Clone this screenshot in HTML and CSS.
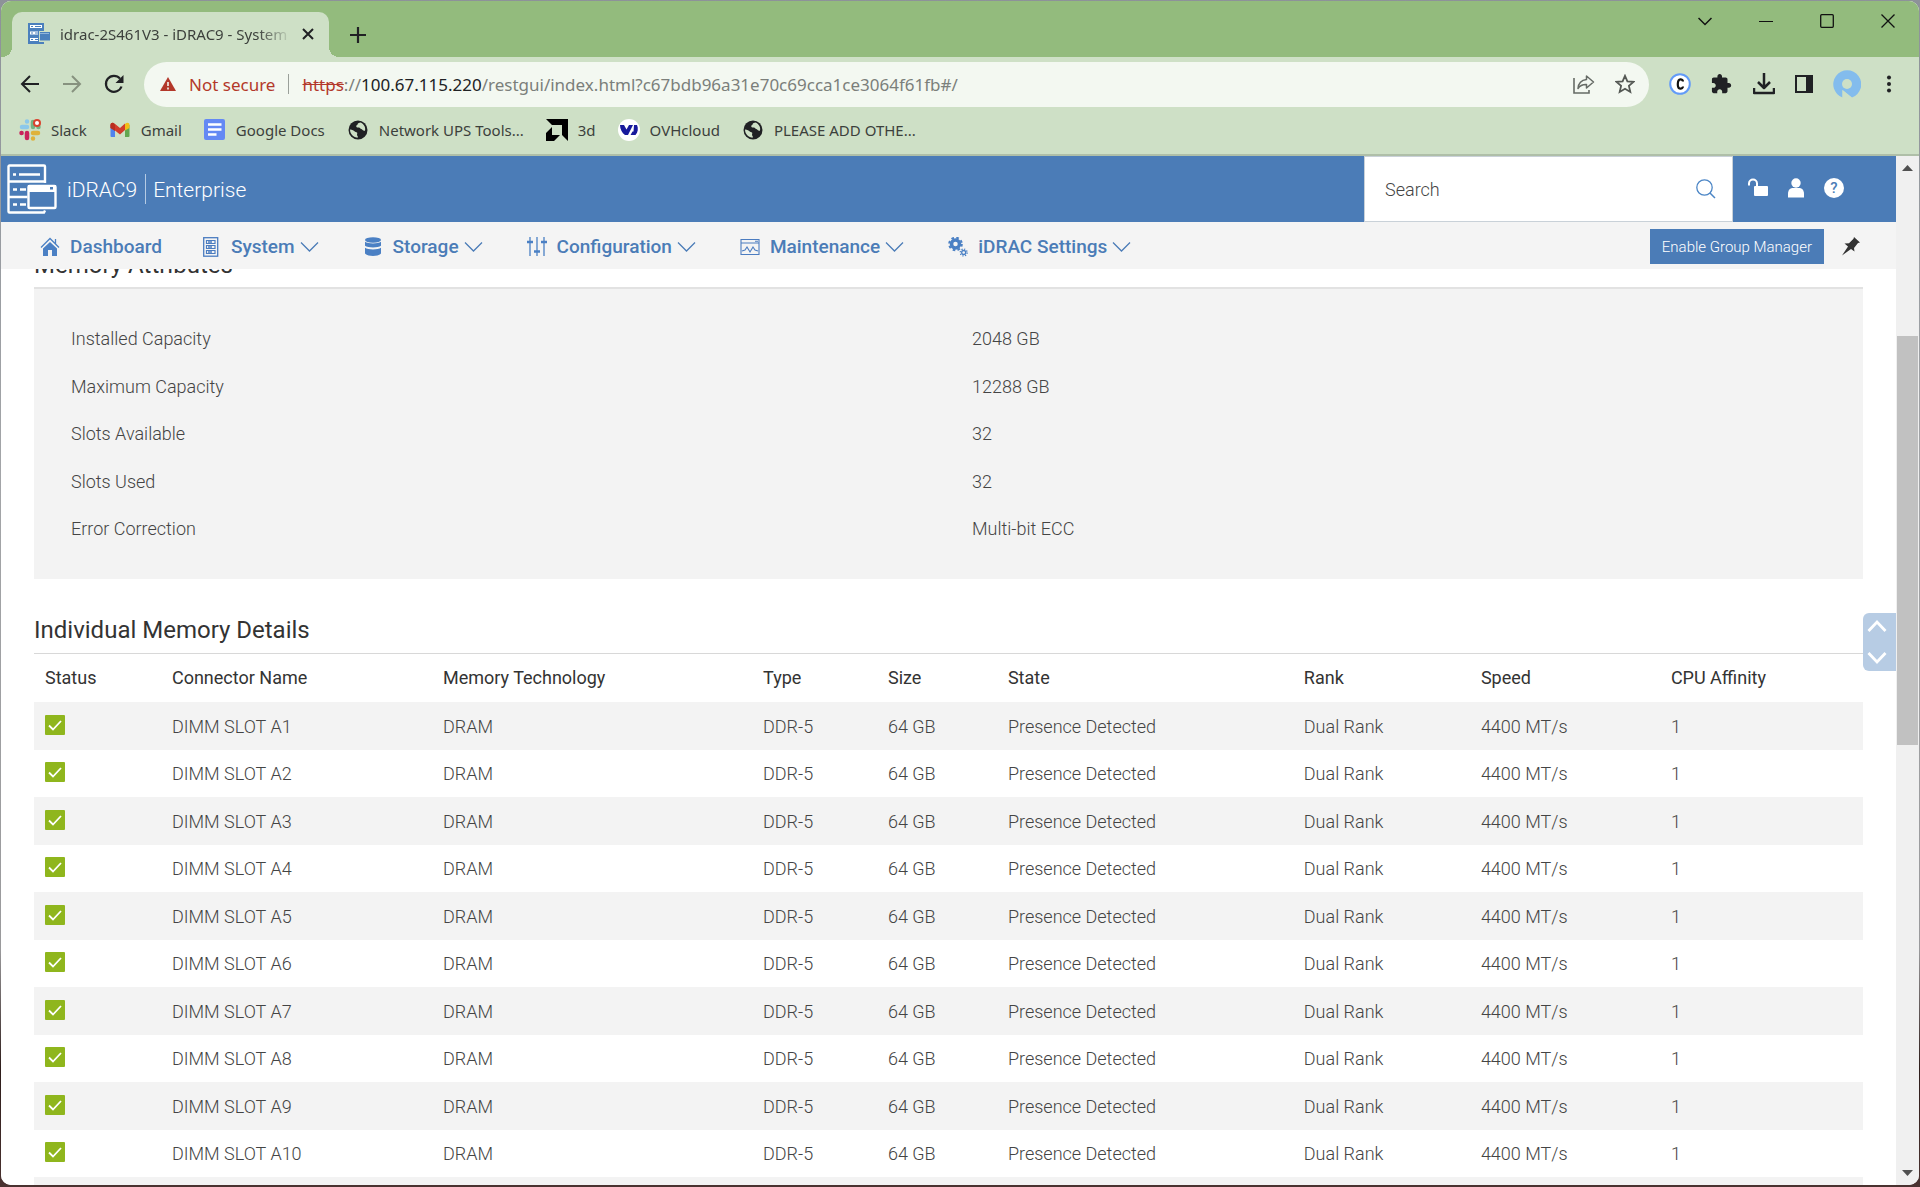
FILE: index.html
```html
<!DOCTYPE html>
<html lang="en">
<head>
<meta charset="utf-8">
<title>idrac-2S461V3 - iDRAC9 - System</title>
<link rel="stylesheet" href="styles.css">
</head>
<body>
<svg class="defs" aria-hidden="true">
  <symbol id="globe" viewBox="0 0 20 20"><circle cx="10" cy="10" r="9.5" fill="#202124"/><path d="M2 9.5c2.500.3 3.800.8 4.500 1.800.6.900 1.800.6 2.500 1.200.7.700-.2 1.600.1 2.800.2.900 1 1.300.9 2.300C5.500 17.600 2 14 2 9.500zM12.500 2.400c-1 .3-2.800.5-2.800 1.600s-1.500 1-1.500 2.200 1.500 1.400 2.600 1.200c1.100-.2 1.400 1.400 2.600 1.700 1.200.3 1.500 2.200 3.600 1.600C18 7 15.500 3.500 12.500 2.400z" fill="#cee0c6"/></symbol>
  <symbol id="chev" viewBox="0 0 19 12"><path d="M1 1.500l8.500 8.500L18 1.500" fill="none" stroke="currentColor" stroke-width="1.300"/></symbol>
  <symbol id="ok" viewBox="0 0 20 20"><rect width="20" height="20" rx="1" fill="#8fb61d"/><path d="M4 10.500l4 4 8-8.500" fill="none" stroke="#fff" stroke-width="1.800"/></symbol>
</svg>
<div class="window">
  <header class="chrome">
    <div class="tabbar">
      <div class="tab">
        <svg width="22" height="22" viewBox="0 0 22 22"><path d="M0 0h16v8h-5v11h5v2H0z" fill="#4b80bd"/><path d="M2 3.500h12M2 10h8M2 16.500h8" stroke="#fff" stroke-width="3"/><path d="M3 3.500h2M3 10h2M3 16.500h2M7 3.500h6M7 10h3M7 16.500h3" stroke="#4b80bd" stroke-width="1.200"/><rect x="12" y="9" width="10" height="8.500" fill="#4b80bd"/><path d="M12 10.500h9" stroke="#8fb3da"/></svg>
        <span class="tab-title">idrac-2S461V3 - iDRAC9 - System</span>
        <button class="plain" aria-label="Close tab"><svg width="12" height="12" viewBox="0 0 12 12"><path d="M1 1l10 10M11 1L1 11" stroke="#202124" stroke-width="2"/></svg></button>
      </div>
      <button class="plain newtab" aria-label="New tab"><svg width="16" height="16" viewBox="0 0 16 16"><path d="M8 0v16M0 8h16" stroke="#202124" stroke-width="2.200"/></svg></button>
      <div class="wincontrols">
        <button class="plain" aria-label="Search tabs"><svg width="14" height="14" viewBox="0 0 14 14"><path d="M.5 4L7 10.500 13.500 4" fill="none" stroke="#111" stroke-width="1.500"/></svg></button>
        <button class="plain" aria-label="Minimize"><svg width="14" height="14" viewBox="0 0 14 14"><path d="M0 7.500h14" stroke="#111" stroke-width="1.200"/></svg></button>
        <button class="plain" aria-label="Maximize"><svg width="14" height="14" viewBox="0 0 14 14"><rect x=".7" y=".7" width="12.600" height="12.600" rx="1" fill="none" stroke="#111" stroke-width="1.300"/></svg></button>
        <button class="plain" aria-label="Close"><svg width="14" height="14" viewBox="0 0 14 14"><path d="M.5.5l13 13M13.500.5l-13 13" stroke="#111" stroke-width="1.300"/></svg></button>
      </div>
    </div>
    <div class="toolbar">
      <div class="history">
        <button class="plain" aria-label="Back"><svg width="20" height="20" viewBox="0 0 20 20"><path d="M19 10H2.500M10 2l-8 8 8 8" fill="none" stroke="#202124" stroke-width="2"/></svg></button>
        <button class="plain" aria-label="Forward"><svg width="20" height="20" viewBox="0 0 20 20"><path d="M1 10h16.500M10 2l8 8-8 8" fill="none" stroke="#87927f" stroke-width="2"/></svg></button>
        <button class="plain" aria-label="Reload"><svg width="20" height="20" viewBox="0 0 20 20"><path d="M17.500 12.500A8 8 0 1 1 16 4.600" fill="none" stroke="#202124" stroke-width="2.200"/><path d="M19.500 1v8h-8z" fill="#202124"/></svg></button>
      </div>
      <div class="omnibox">
        <svg width="16" height="14" viewBox="0 0 16 14"><path d="M8 0l8 14H0z" fill="#b3382a"/><path d="M8 5v4M8 10.500v2" stroke="#f3f8f1" stroke-width="1.600"/></svg>
        <span class="insecure">Not secure</span>
        <span class="bar"></span>
        <div class="url" role="textbox" contenteditable="true" spellcheck="false" aria-label="Address"><s>https</s>://<b>100.67.115.220</b>/restgui/index.html?c67bdb96a31e70c69cca1ce3064f61fb#/</div>
        <button class="plain" aria-label="Share"><svg width="22" height="20" viewBox="0 0 22 20"><path d="M1 4v15h15v-3" fill="none" stroke="#666b66" stroke-width="1.600"/><path d="M5 14.500C5.500 8.500 9 6 13.500 5.500V2l7 6-7 6v-3.500C9.500 10.300 7 11.500 5 14.500z" fill="none" stroke="#666b66" stroke-width="1.500" stroke-linejoin="round"/></svg></button>
        <button class="plain" aria-label="Bookmark"><svg width="20" height="20" viewBox="0 0 20 20"><path d="M10 1.800l2.400 5.600 6.100.5-4.600 4 1.400 6L10 14.700l-5.300 3.200 1.400-6-4.600-4 6.100-.5z" fill="none" stroke="#555955" stroke-width="1.800"/></svg></button>
      </div>
      <button class="plain" aria-label="Extension C"><svg width="22" height="22" viewBox="0 0 22 22"><circle cx="11" cy="11" r="9.800" fill="#fff" stroke="#629bf8" stroke-width="2"/><path d="M14 8.500C13.800 6 9 4.500 8.800 11s5 5.200 5.200 2.500" fill="none" stroke="#111" stroke-width="2.200"/></svg></button>
      <button class="plain" aria-label="Extensions"><svg width="22" height="22" viewBox="1 0 24 24"><path fill="#202124" d="M20.500 11H19V7c0-1.100-.9-2-2-2h-4V3.500C13 2.120 11.880 1 10.500 1S8 2.120 8 3.500V5H4c-1.100 0-1.990.9-1.990 2v3.800H3.500c1.490 0 2.700 1.210 2.700 2.700s-1.210 2.700-2.700 2.700H2V20c0 1.100.9 2 2 2h3.800v-1.500c0-1.490 1.210-2.700 2.700-2.700 1.490 0 2.700 1.210 2.700 2.700V22H17c1.100 0 2-.9 2-2v-4h1.500c1.380 0 2.500-1.120 2.500-2.500S21.880 11 20.500 11z"/></svg></button>
      <button class="plain" aria-label="Downloads"><svg width="22" height="22" viewBox="0 0 22 22"><path d="M11 0v14M5 9l6 6 6-6M1 15v5h20v-5" fill="none" stroke="#202124" stroke-width="2.500" stroke-linejoin="round"/></svg></button>
      <button class="plain" aria-label="Side panel"><svg width="18" height="18" viewBox="1 1 18 18"><rect x="2" y="2" width="16" height="16" fill="none" stroke="#202124" stroke-width="2"/><path d="M12 1h7v18h-7z" fill="#202124"/></svg></button>
      <button class="plain" aria-label="Profile"><svg width="28" height="28" viewBox="0 0 28 28"><path d="M9.500 28V20L19 27.500A14 14 0 1 0 9.500 27.500z" fill="#83bced"/><path d="M9.500 20l9.500 8h-9.500z" fill="#cee0c6"/><circle cx="14" cy="14" r="5" fill="#cee0c6"/></svg></button>
      <button class="plain" aria-label="Menu"><svg width="16" height="18" viewBox="0 0 16 18"><g fill="#202124"><circle cx="8" cy="2.500" r="2"/><circle cx="8" cy="9" r="2"/><circle cx="8" cy="15.500" r="2"/></g></svg></button>
    </div>
    <nav class="bookmarks">
      <a href="#"><svg width="22" height="22" viewBox="0 0 22 22"><g fill="none" stroke-width="4.500" stroke-linecap="round"><path d="M3 8h5M8 2.500v.1" stroke="#8cc8ea"/><path d="M14 3v5M19.500 8h-.1" stroke="#74b586"/><path d="M14 14h5M14 19.500v-.1" stroke="#dfb23a"/><path d="M8 14v5M2.500 14h.1" stroke="#c9235c"/></g><circle cx="18" cy="4" r="4" fill="#d9442f"/><circle cx="18" cy="4" r="2" fill="#fff"/></svg>Slack</a>
      <a href="#"><svg width="22" height="22" viewBox="0 0 22 22"><path d="M1.500 6H6v12H2.500a1 1 0 0 1-1-1z" fill="#4f83ee"/><path d="M16 6h4.500v11a1 1 0 0 1-1 1H16z" fill="#62a650"/><path d="M1.500 9V6c0-2 2-3 4-1.500L11 9l5-4.500V11l-5 4.500-5-4z" fill="#d23c2c"/><path d="M1.500 9V6c0-1.500 1.500-2.500 3-2L6 6v6z" fill="#b92e20"/><path d="M16 11.500V5c2-2 4.500-1.500 4.500 1v3z" fill="#f2bd18"/></svg>Gmail</a>
      <a href="#"><svg width="22" height="22" viewBox="0 0 22 22"><rect width="21" height="21" rx="2" fill="#6489f4"/><path d="M4 5.500h13.500M4 10.500h13.500M4 15.500h8.500" stroke="#fff" stroke-width="2.500"/></svg>Google Docs</a>
      <a href="#"><svg width="22" height="20"><use href="#globe"/></svg>Network UPS Tools...</a>
      <a href="#"><svg width="22" height="22" viewBox="0 0 22 22"><path d="M0 0h22v22l-6-6V6H6z"/><path d="M6 8v8h8l-6 6H0v-8z"/></svg>3d</a>
      <a href="#"><svg width="22" height="22" viewBox="0 0 22 22"><circle cx="11" cy="11" r="11" fill="#fff"/><path d="M2 6h4l2.500 4.500L11 6h4l-5 10H7C4 14 2 10 2 6zM16 6h3c1.500 3.500 1 7-1.500 10h-5l2-3.500h1z" fill="#171a9c"/></svg>OVHcloud</a>
      <a href="#"><svg width="22" height="20"><use href="#globe"/></svg>PLEASE ADD OTHE...</a>
    </nav>
  </header>
  <div class="viewport">
    <div class="page">
      <header class="brandbar">
        <svg class="logo" width="50" height="50" viewBox="0 0 50 50"><g fill="none" stroke="#fff" stroke-width="2.400"><path d="M38 19V2.500a1 1 0 0 0-1-1H2.500a1 1 0 0 0-1 1v45a1 1 0 0 0 1 1H37l1-2M1.500 17.500h36.500M1.500 33h19"/><path d="M6 10.500h3M12 10.500h21M6 25.500h4M13 25.500h6M6 40.500h4M13 40.500h6"/><rect x="21.500" y="22" width="27" height="22" rx="1"/></g><path d="M21 21h28v7H21z" fill="#fff"/><path d="M43 23h3v2.500h-3z" fill="#4b7cb7"/></svg>
        <span class="brand">iDRAC9</span><span class="brand edition">Enterprise</span>
        <label class="search"><input type="text" placeholder="Search" aria-label="Search"><svg width="20" height="20" viewBox="0 0 20 20"><circle cx="8.500" cy="8.500" r="7.700" fill="none" stroke="#4c86c6" stroke-width="1.300"/><path d="M14 14l5 5" stroke="#4c86c6" stroke-width="1.500"/></svg></label>
        <div class="account">
          <button class="plain" aria-label="Lock"><svg width="20" height="20" viewBox="0 0 20 20"><path d="M1 7.500V5.500a4 4 0 0 1 8 0V9" fill="none" stroke="#fff" stroke-width="2"/><rect x="6" y="8" width="14" height="10" rx="1" fill="#fff"/></svg></button>
          <button class="plain" aria-label="User"><svg width="20" height="20" viewBox="0 0 20 20"><circle cx="10" cy="5" r="4.700" fill="#fff"/><path d="M2 19.500V16c0-4 2-6 5-6h6c3 0 5 2 5 6v3.500z" fill="#fff"/></svg></button>
          <button class="plain help" aria-label="Help">?</button>
        </div>
      </header>
      <nav class="menubar">
        <a class="item" href="#"><svg width="20" height="20" viewBox="0 0 20 20"><path d="M10 5l7 6.500V19h-5v-6H8v6H3v-7.500z" fill="#4b80c4"/><path d="M1 10.500L10 1.500l9 9M15.500 2v5" fill="none" stroke="#4b80c4" stroke-width="1.300"/></svg>Dashboard</a>
        <button class="item plain"><svg width="20" height="20" viewBox="0 0 20 20"><g fill="none" stroke="#4b7cc0"><rect x="2.700" y=".7" width="14" height="18.500" stroke-width="1.300"/><path d="M5.500 3.500h8.500v3H5.500zM5.500 8.500h8.500v3H5.500zM5.500 13.500h8.500v3H5.500z" stroke-width="1.200"/><path d="M7 5h4M7 10h4M7 15h4" stroke-width="1.500"/></g></svg>System<svg class="chev" width="19" height="12"><use href="#chev"/></svg></button>
        <button class="item plain"><svg width="20" height="20" viewBox="0 0 20 20"><g fill="#4b80c4"><ellipse cx="10" cy="3" rx="8" ry="2.700"/><path d="M2 4.800c3 2.200 13 2.200 16 0v4c-3 2.200-13 2.200-16 0zM2 10.800c3 2.200 13 2.200 16 0v5.700c-2 3.300-14 3.300-16 0z"/></g></svg>Storage<svg class="chev" width="19" height="12"><use href="#chev"/></svg></button>
        <button class="item plain"><svg width="20" height="20" viewBox="0 0 20 20"><path d="M3 0v19M10 0v19M17 0v19" stroke="#4b80c4" stroke-width="1.300"/><path d="M0 5h6M14 5h6M7 14.500h6" stroke="#4b80c4" stroke-width="2.600"/></svg>Configuration<svg class="chev" width="19" height="12"><use href="#chev"/></svg></button>
        <button class="item plain"><svg width="20" height="20" viewBox="0 0 20 20"><path d="M1 2.500h18v15H1zM1 6h18M2 14l3-1 2-3 3 5 3-5 2 3 3 1M15 4.200h3" fill="none" stroke="#4b7cc0" stroke-width="1.100"/></svg>Maintenance<svg class="chev" width="19" height="12"><use href="#chev"/></svg></button>
        <button class="item plain"><svg width="20" height="20" viewBox="0 0 20 20"><circle cx="7.500" cy="7" r="4" fill="none" stroke="#4b80c4" stroke-width="3.500"/><circle cx="7.500" cy="7" r="6.300" fill="none" stroke="#4b80c4" stroke-width="2" stroke-dasharray="2.600 2.350"/><circle cx="15.700" cy="15.500" r="2" fill="none" stroke="#4b80c4" stroke-width="1.300"/><circle cx="15.700" cy="15.500" r="3.400" fill="none" stroke="#4b80c4" stroke-width="1.400" stroke-dasharray="1.200 1.470"/></svg>iDRAC Settings<svg class="chev" width="19" height="12"><use href="#chev"/></svg></button>
        <button class="enable">Enable Group Manager</button>
        <button class="plain" aria-label="Pin"><svg width="20" height="20" viewBox="0 0 20 20"><path d="M13 0l6 5.500-2 .5-4 5 .5 3.500L10 12 1 18.500 7 9.500 3.500 6.500 8 6.300l4.500-4.500z" fill="#333"/></svg></button>
      </nav>
      <main class="content">
        <section class="attributes">
          <h2>Memory Attributes</h2>
          <dl>
            <dt>Installed Capacity</dt><dd>2048 GB</dd>
            <dt>Maximum Capacity</dt><dd>12288 GB</dd>
            <dt>Slots Available</dt><dd>32</dd>
            <dt>Slots Used</dt><dd>32</dd>
            <dt>Error Correction</dt><dd>Multi-bit ECC</dd>
          </dl>
        </section>
        <section>
          <h2>Individual Memory Details</h2>
          <table>
            <colgroup><col class="c-status"><col class="c-name"><col class="c-tech"><col class="c-type"><col class="c-size"><col class="c-state"><col class="c-rank"><col class="c-speed"><col></colgroup>
            <thead><tr><th>Status</th><th>Connector Name</th><th>Memory Technology</th><th>Type</th><th>Size</th><th>State</th><th>Rank</th><th>Speed</th><th>CPU Affinity</th></tr></thead>
            <tbody>
              <tr><td><svg class="ok" role="img" aria-label="OK"><use href="#ok"/></svg></td><td>DIMM SLOT A1</td><td>DRAM</td><td>DDR-5</td><td>64 GB</td><td>Presence Detected</td><td>Dual Rank</td><td>4400 MT/s</td><td>1</td></tr>
              <tr><td><svg class="ok" role="img" aria-label="OK"><use href="#ok"/></svg></td><td>DIMM SLOT A2</td><td>DRAM</td><td>DDR-5</td><td>64 GB</td><td>Presence Detected</td><td>Dual Rank</td><td>4400 MT/s</td><td>1</td></tr>
              <tr><td><svg class="ok" role="img" aria-label="OK"><use href="#ok"/></svg></td><td>DIMM SLOT A3</td><td>DRAM</td><td>DDR-5</td><td>64 GB</td><td>Presence Detected</td><td>Dual Rank</td><td>4400 MT/s</td><td>1</td></tr>
              <tr><td><svg class="ok" role="img" aria-label="OK"><use href="#ok"/></svg></td><td>DIMM SLOT A4</td><td>DRAM</td><td>DDR-5</td><td>64 GB</td><td>Presence Detected</td><td>Dual Rank</td><td>4400 MT/s</td><td>1</td></tr>
              <tr><td><svg class="ok" role="img" aria-label="OK"><use href="#ok"/></svg></td><td>DIMM SLOT A5</td><td>DRAM</td><td>DDR-5</td><td>64 GB</td><td>Presence Detected</td><td>Dual Rank</td><td>4400 MT/s</td><td>1</td></tr>
              <tr><td><svg class="ok" role="img" aria-label="OK"><use href="#ok"/></svg></td><td>DIMM SLOT A6</td><td>DRAM</td><td>DDR-5</td><td>64 GB</td><td>Presence Detected</td><td>Dual Rank</td><td>4400 MT/s</td><td>1</td></tr>
              <tr><td><svg class="ok" role="img" aria-label="OK"><use href="#ok"/></svg></td><td>DIMM SLOT A7</td><td>DRAM</td><td>DDR-5</td><td>64 GB</td><td>Presence Detected</td><td>Dual Rank</td><td>4400 MT/s</td><td>1</td></tr>
              <tr><td><svg class="ok" role="img" aria-label="OK"><use href="#ok"/></svg></td><td>DIMM SLOT A8</td><td>DRAM</td><td>DDR-5</td><td>64 GB</td><td>Presence Detected</td><td>Dual Rank</td><td>4400 MT/s</td><td>1</td></tr>
              <tr><td><svg class="ok" role="img" aria-label="OK"><use href="#ok"/></svg></td><td>DIMM SLOT A9</td><td>DRAM</td><td>DDR-5</td><td>64 GB</td><td>Presence Detected</td><td>Dual Rank</td><td>4400 MT/s</td><td>1</td></tr>
              <tr><td><svg class="ok" role="img" aria-label="OK"><use href="#ok"/></svg></td><td>DIMM SLOT A10</td><td>DRAM</td><td>DDR-5</td><td>64 GB</td><td>Presence Detected</td><td>Dual Rank</td><td>4400 MT/s</td><td>1</td></tr>
              <tr><td></td><td></td><td></td><td></td><td></td><td></td><td></td><td></td><td></td></tr>
            </tbody>
          </table>
        </section>
        <div class="jump">
          <button class="plain" aria-label="Jump up"><svg width="20" height="14" viewBox="0 0 20 14"><path d="M1.500 12L10 3l8.500 9" fill="none" stroke="#fff" stroke-width="2.800"/></svg></button>
          <button class="plain" aria-label="Jump down"><svg width="20" height="14" viewBox="0 0 20 14"><path d="M1.500 2l8.500 9 8.500-9" fill="none" stroke="#fff" stroke-width="2.800"/></svg></button>
        </div>
      </main>
    </div>
    <div class="scrollbar" aria-hidden="true">
      <svg width="11" height="6" viewBox="0 0 11 6"><path d="M0 6l5.500-6L11 6z" fill="#505050"/></svg>
      <div class="track"><div class="thumb"></div></div>
      <svg width="11" height="6" viewBox="0 0 11 6"><path d="M0 0l5.500 6L11 0z" fill="#505050"/></svg>
    </div>
  </div>
</div>
</body>
</html>
```
FILE: styles.css
```css
* { box-sizing: border-box; }
html, body { height: 100%; margin: 0; }
body {
  padding: 1px 1px 2px;
  overflow: hidden;
  background: linear-gradient(#8d9299, #a3a5a8 40%, #9a9a9c 80%, #2e1d1b 90%, #4a3230);
  font-family: Roboto, "Liberation Sans", sans-serif;
  font-size: 18px;
  font-weight: 300;
  color: #444;
}
h2, dl, dd { margin: 0; }
a { color: inherit; text-decoration: none; }
svg { display: block; flex: none; }
.defs { position: absolute; width: 0; height: 0; }
.plain { display: flex; align-items: center; padding: 0; border: 0; background: none; font: inherit; color: inherit; }

.window { display: flex; flex-direction: column; height: 100%; border-radius: 10px; overflow: hidden; background: #fff; }

/* Browser frame */
.chrome { font-family: "Noto Sans", "Open Sans", sans-serif; font-weight: 400; color: #3c403c; background: #cee0c6; border-bottom: 2px solid #afbfa8; }
.tabbar { display: flex; height: 56px; padding: 11px 24px 0 11px; background: #93bb7d; }
.tab { position: relative; display: flex; align-items: center; gap: 10px; width: 317px; padding: 0 15px 2px 16px; border-radius: 10px 10px 0 0; background: #cee0c6; font-size: 15px; }
.tab::before, .tab::after { content: ""; position: absolute; bottom: 0; width: 10px; height: 10px; }
.tab::before { right: 100%; background: radial-gradient(circle at 0 0, transparent 10px, #cee0c6 10px); }
.tab::after { left: 100%; background: radial-gradient(circle at 100% 0, transparent 10px, #cee0c6 10px); }
.tab-title { flex: 1; overflow: hidden; white-space: nowrap; mask-image: linear-gradient(90deg, #000 85%, transparent); }
.newtab { margin-left: 21px; }
.wincontrols { display: flex; gap: 47px; height: 18px; margin-left: auto; }
.toolbar { display: flex; align-items: center; gap: 20px; height: 54px; padding: 0 22px 0 19px; }
.history { display: flex; gap: 22px; }
.omnibox { flex: 1; display: flex; align-items: center; gap: 13px; height: 45px; padding: 0 14px 0 16px; border-radius: 23px; background: #f3f8f1; color: #7b7f7b; font-size: 17px; }
.insecure { color: #b3382a; }
.bar { width: 1px; height: 20px; background: #9aa09a; }
.url { flex: 1; overflow: hidden; white-space: nowrap; outline: 0; }
.url s { color: #b3382a; }
.url b { font-weight: 400; color: #202124; }
.omnibox .plain + .plain { margin-left: 7px; }
.bookmarks { display: flex; gap: 22px; height: 43px; padding: 0 18px 5px; font-size: 15px; align-items: center; }
.bookmarks a { display: flex; align-items: center; gap: 10px; }

/* Page area */
.viewport { flex: 1; display: flex; min-height: 0; }
.page { flex: 1; display: flex; flex-direction: column; min-width: 0; background: #fff; }
.scrollbar { display: flex; flex-direction: column; align-items: center; width: 23px; padding: 9px 1px; background: #f0f0f0; }
.track { flex: 1; align-self: stretch; padding-top: 165px; }
.thumb { height: 49%; background: #c1c1c1; }

.brandbar { display: flex; align-items: center; height: 66px; flex: none; padding-left: 6px; background: #4b7cb7; color: #fff; }
.brand { padding-top: 2px; font-size: 21px; line-height: 28px; margin-left: 10px; }
.edition { margin-left: 8px; padding-left: 7px; border-left: 1px solid #b5cbe4; }
.search { display: flex; align-items: center; width: 369px; height: 100%; margin-left: auto; padding: 0 16px 0 20px; border: 1px solid #c9d1d8; background: #fff; }
.search input { flex: 1; min-width: 0; border: 0; padding: 0; outline: 0; font: inherit; }
.search input::placeholder { color: #444; opacity: 1; }
.account { display: flex; align-items: center; gap: 18px; width: 163px; padding: 0 0 2px 15px; }
.help { justify-content: center; width: 20px; height: 20px; border-radius: 50%; background: #fff; color: #4b7cb7; font-size: 15px; font-weight: 500; }

.menubar { display: flex; align-items: center; height: 47px; flex: none; padding: 2px 35px 0 39px; background: #f4f4f4; z-index: 1; }
.item { display: flex; align-items: center; gap: 10px; margin-right: 39px; font-size: 19px; font-weight: 500; color: #4b7cb7; white-space: nowrap; }
.chev { margin: 0 5px 0 -5px; }
.enable { height: 35px; margin: 0 17px 0 auto; padding: 0 12px; border: 0; background: #4b7cb7; color: #fff; font: inherit; font-size: 15px; }

.content { position: relative; flex: 1; min-height: 0; overflow: hidden; padding: 0 33px; }
h2 { font-size: 24px; font-weight: 400; line-height: 28px; color: #333; }
.attributes { margin-top: -18px; }
.attributes dl { display: grid; grid-template: 48px 47px 48px 47px 48px / 50% 1fr; margin: 8px 0 37px; padding: 26px 0 26px 37px; border-top: 2px solid #e2e2e2; background: #f3f3f3; }
dt, dd { line-height: 47px; }
dd { padding-left: 5px; }
table { width: 100%; margin-top: 9px; table-layout: fixed; border-collapse: collapse; border-top: 1px solid #d8d8d8; }
th, td { padding: 1px 0 0 11px; text-align: left; font-weight: 300; white-space: nowrap; }
td:first-child { padding: 0 0 2px 11px; }
th { height: 48px; padding-top: 0; font-weight: 400; color: #333; }
tbody tr { height: 47px; }
tbody tr:nth-child(odd) { height: 48px; background: #f3f3f3; }
.c-status { width: 6.94%; }
.c-name { width: 14.82%; }
.c-tech { width: 17.5%; }
.c-type { width: 6.83%; }
.c-size { width: 6.56%; }
.c-state { width: 16.18%; }
.c-rank { width: 9.68%; }
.c-speed { width: 10.39%; }
.ok { width: 20px; height: 20px; }

/* Floating section jumper at the page's right edge */
.jump { position: absolute; top: 344px; right: 0; display: flex; flex-direction: column; justify-content: space-between; width: 33px; height: 58px; padding: 6px 4px; border-radius: 6px 0 0 6px; background: #b7cce4; }
```
